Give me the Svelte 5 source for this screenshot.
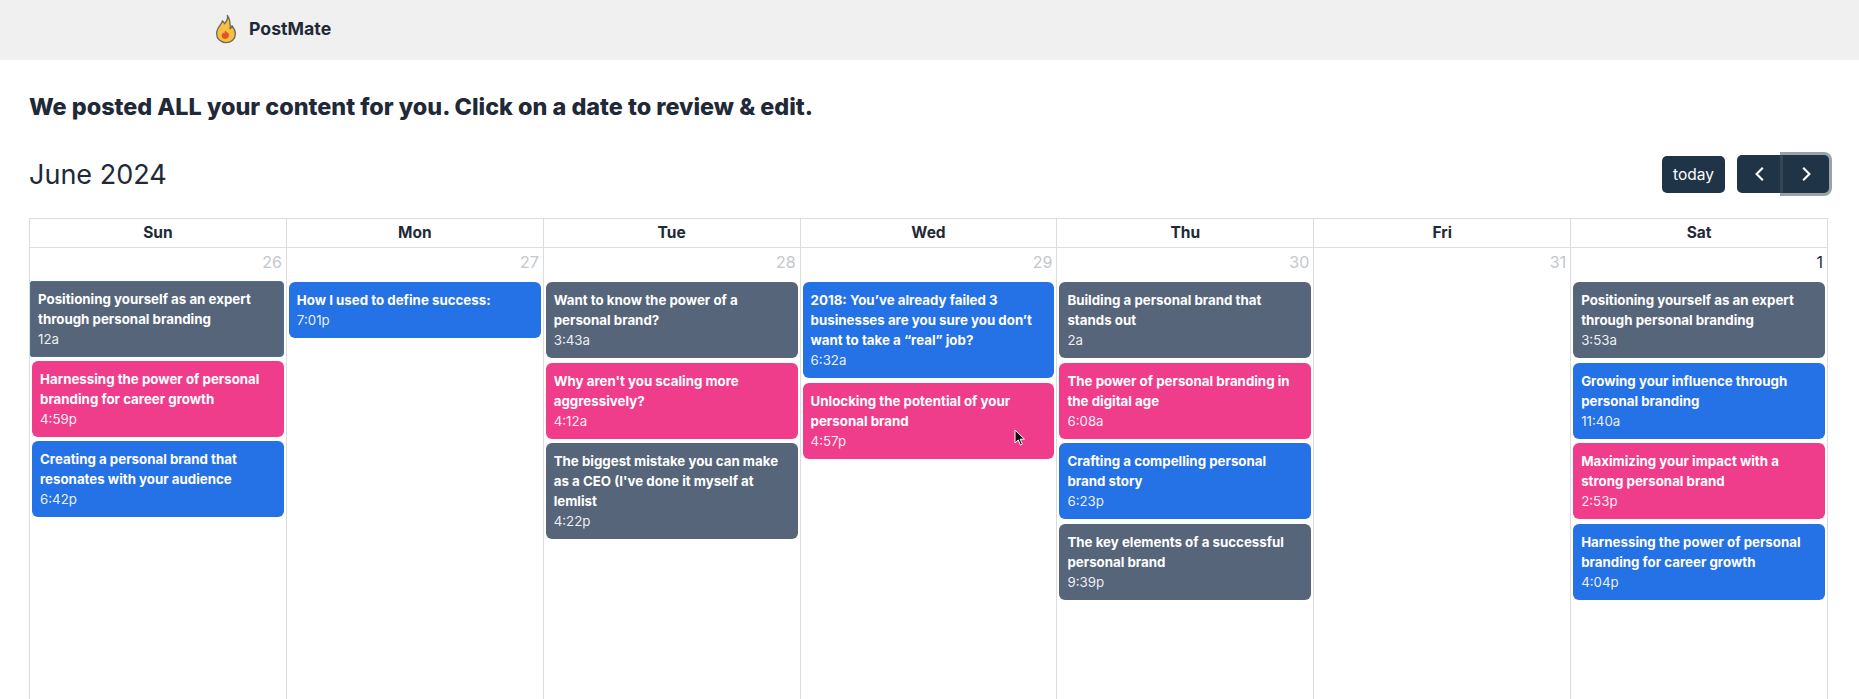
<script>
  const days = [
    { name: 'Sun', num: 26, first: true, events: [
      ['gray', 'Positioning yourself as an expert through personal branding', '12a'],
      ['pink', 'Harnessing the power of personal branding for career growth', '4:59p'],
      ['blue', 'Creating a personal brand that resonates with your audience', '6:42p'] ] },
    { name: 'Mon', num: 27, events: [ ['blue', 'How I used to define success:', '7:01p'] ] },
    { name: 'Tue', num: 28, events: [
      ['gray', 'Want to know the power of a personal brand?', '3:43a'],
      ['pink', "Why aren't you scaling more aggressively?", '4:12a'],
      ['gray', "The biggest mistake you can make as a CEO (I've done it myself at lemlist", '4:22p'] ] },
    { name: 'Wed', num: 29, events: [
      ['blue', '2018: You’ve already failed 3 businesses are you sure you don’t want to take a “real” job?', '6:32a'],
      ['pink', 'Unlocking the potential of your personal brand', '4:57p'] ] },
    { name: 'Thu', num: 30, events: [
      ['gray', 'Building a personal brand that stands out', '2a'],
      ['pink', 'The power of personal branding in the digital age', '6:08a'],
      ['blue', 'Crafting a compelling personal brand story', '6:23p'],
      ['gray', 'The key elements of a successful personal brand', '9:39p'] ] },
    { name: 'Fri', num: 31, events: [] },
    { name: 'Sat', num: 1, current: true, events: [
      ['gray', 'Positioning yourself as an expert through personal branding', '3:53a'],
      ['blue', 'Growing your influence through personal branding', '11:40a'],
      ['pink', 'Maximizing your impact with a strong personal brand', '2:53p'],
      ['blue', 'Harnessing the power of personal branding for career growth', '4:04p'] ] }
  ];
</script>

<div class="page">
  <nav class="nav">
    <svg class="flame" viewBox="0 0 24 32" aria-hidden="true">
      <path d="M13.500 1.500c1 4-1 6.500-3 9-.6-1.500-1.300-2.500-2.500-3.200C8.300 10.500 2 14 2 21c0 5.500 4.500 9.500 10 9.500s10-3.800 10-9.500c0-4-2-6.500-3.600-8.500-.3 1.600-1 2.600-2 3.300.4-5.500-.4-10.500-2.900-14.300z" fill="#f9bf3f" stroke="#6b6a5c" stroke-width="1.400" stroke-linejoin="round"/>
      <path d="M11.500 17.500c.5 1.600 2.600 2 3.400 3.900.9 2.600-1 5.100-3.600 5.100-2.500 0-4.300-1.900-3.900-4.200.2-1.100.8-2 1.700-2.600.2.700.5 1.100 1 1.300.1-1.300.5-2.500 1.400-3.500z" fill="#e2512a"/>
    </svg>
    <span class="brand">PostMate</span>
  </nav>

  <main class="main">
    <h1 class="headline">We posted ALL your content for you. Click on a date to review &amp; edit.</h1>

    <div class="toolbar">
      <h2 class="month">June 2024</h2>
      <div class="actions">
        <button class="btn today">today</button>
        <div class="group">
          <button class="btn arrow left" aria-label="prev">
            <svg viewBox="0 0 16 16"><path d="M10.500 2.500 5 8l5.500 5.500" /></svg>
          </button>
          <button class="btn arrow right focus" aria-label="next">
            <svg viewBox="0 0 16 16"><path d="M5.500 2.500 11 8l-5.500 5.500" /></svg>
          </button>
        </div>
      </div>
    </div>

    <div class="calendar">
      {#each days as d}
        <div class="head">{d.name}</div>
      {/each}
      {#each days as d}
        <div class="cell">
          <div class="num" class:current={d.current}>{d.num}</div>
          <div class="events" class:first={d.first}>
            {#each d.events as e}
              <div class="event {e[0]}">
                <div class="title">{e[1]}</div>
                <div class="time">{e[2]}</div>
              </div>
            {/each}
          </div>
        </div>
      {/each}
    </div>
  </main>

  <svg class="cursor" viewBox="0 0 12 18" aria-hidden="true">
    <path d="M1 1v13l3.200-3 2.200 5 2-.9-2.200-4.900H10.500z" fill="#111" stroke="#fff" stroke-width="1"/>
  </svg>
</div>

<style>
  :global(body) {
    margin: 0;
    background: #fff;
  }
  .page {
    position: relative;
    height: 699px;
    overflow: hidden;
    font-family: Inter, "Liberation Sans", sans-serif;
    color: #1f2937;
  }
  .nav {
    height: 60px;
    background: #f0f0f0;
    display: flex;
    align-items: center;
    padding: 0 0 3px 214px;
    gap: 11px;
    box-sizing: border-box;
  }
  .flame {
    width: 24px;
    height: 30px;
  }
  .brand {
    font-size: 17.700px;
    font-weight: 700;
    color: #1f2937;
  }
  .main {
    padding: 32px 31px 0 29px;
  }
  .headline {
    margin: 0;
    font-size: 23.400px;
    line-height: 30px;
    font-weight: 800;
    color: #1f2937;
  }
  .toolbar {
    display: flex;
    justify-content: space-between;
    align-items: center;
    margin-top: 32px;
    height: 40px;
  }
  .month {
    margin: 0;
    font-size: 27px;
    font-weight: 400;
    color: #1f2937;
  }
  .actions {
    display: flex;
    gap: 12px;
    align-items: center;
    margin-right: -1px;
  }
  .btn {
    background: #1f3447;
    color: #fff;
    border: none;
    border-radius: 5px;
    font-family: inherit;
    font-size: 15.500px;
    height: 37px;
    padding: 0;
  }
  .today {
    width: 63px;
  }
  .group {
    display: flex;
  }
  .arrow {
    width: 46px;
    height: 38px;
    display: flex;
    align-items: center;
    justify-content: center;
  }
  .arrow svg {
    width: 18px;
    height: 18px;
    fill: none;
    stroke: #fff;
    stroke-width: 1.900;
  }
  .left {
    border-radius: 5px 0 0 5px;
  }
  .right {
    border-radius: 0 5px 5px 0;
  }
  .focus {
    box-shadow: 0 0 0 3px rgba(70, 85, 95, 0.55);
    position: relative;
  }
  .calendar {
    display: grid;
    grid-template-columns: repeat(7, 1fr);
    margin-top: 24px;
    border-top: 1px solid #ddd;
    border-left: 1px solid #ddd;
  }
  .head {
    height: 28px;
    line-height: 28px;
    text-align: center;
    font-size: 15.500px;
    font-weight: 700;
    color: #1f2937;
    border-right: 1px solid #ddd;
    border-bottom: 1px solid #ddd;
  }
  .cell {
    border-right: 1px solid #ddd;
    height: 460px;
  }
  .num {
    height: 34px;
    line-height: 28px;
    text-align: right;
    padding-right: 4px;
    font-size: 16px;
    color: #c4c7cb;
    box-sizing: border-box;
  }
  .num.current {
    color: #1f2937;
  }
  .events {
    display: flex;
    flex-direction: column;
    gap: 4.600px;
    padding: 0 2px;
  }
  .events.first {
    padding-left: 0;
    margin-top: -1px;
    gap: 3.800px;
  }
  .events.first .event + .event {
    margin-left: 2px;
  }
  .events.first .event:first-child {
    border: 1px solid #4c6f9c;
    padding: 7px;
    border-radius: 2px 4px 4px 2px;
  }
  .event {
    border-radius: 6px;
    padding: 8px;
    color: #fff;
    font-size: 13.300px;
    line-height: 20px;
  }
  .title {
    font-weight: 700;
  }
  .time {
    color: rgba(255, 255, 255, 0.92);
  }
  .gray {
    background: #56657a;
  }
  .pink {
    background: #f03d8b;
  }
  .blue {
    background: #2571e6;
  }
  .cursor {
    position: absolute;
    left: 1014px;
    top: 429px;
    width: 12px;
    height: 18px;
  }
</style>
